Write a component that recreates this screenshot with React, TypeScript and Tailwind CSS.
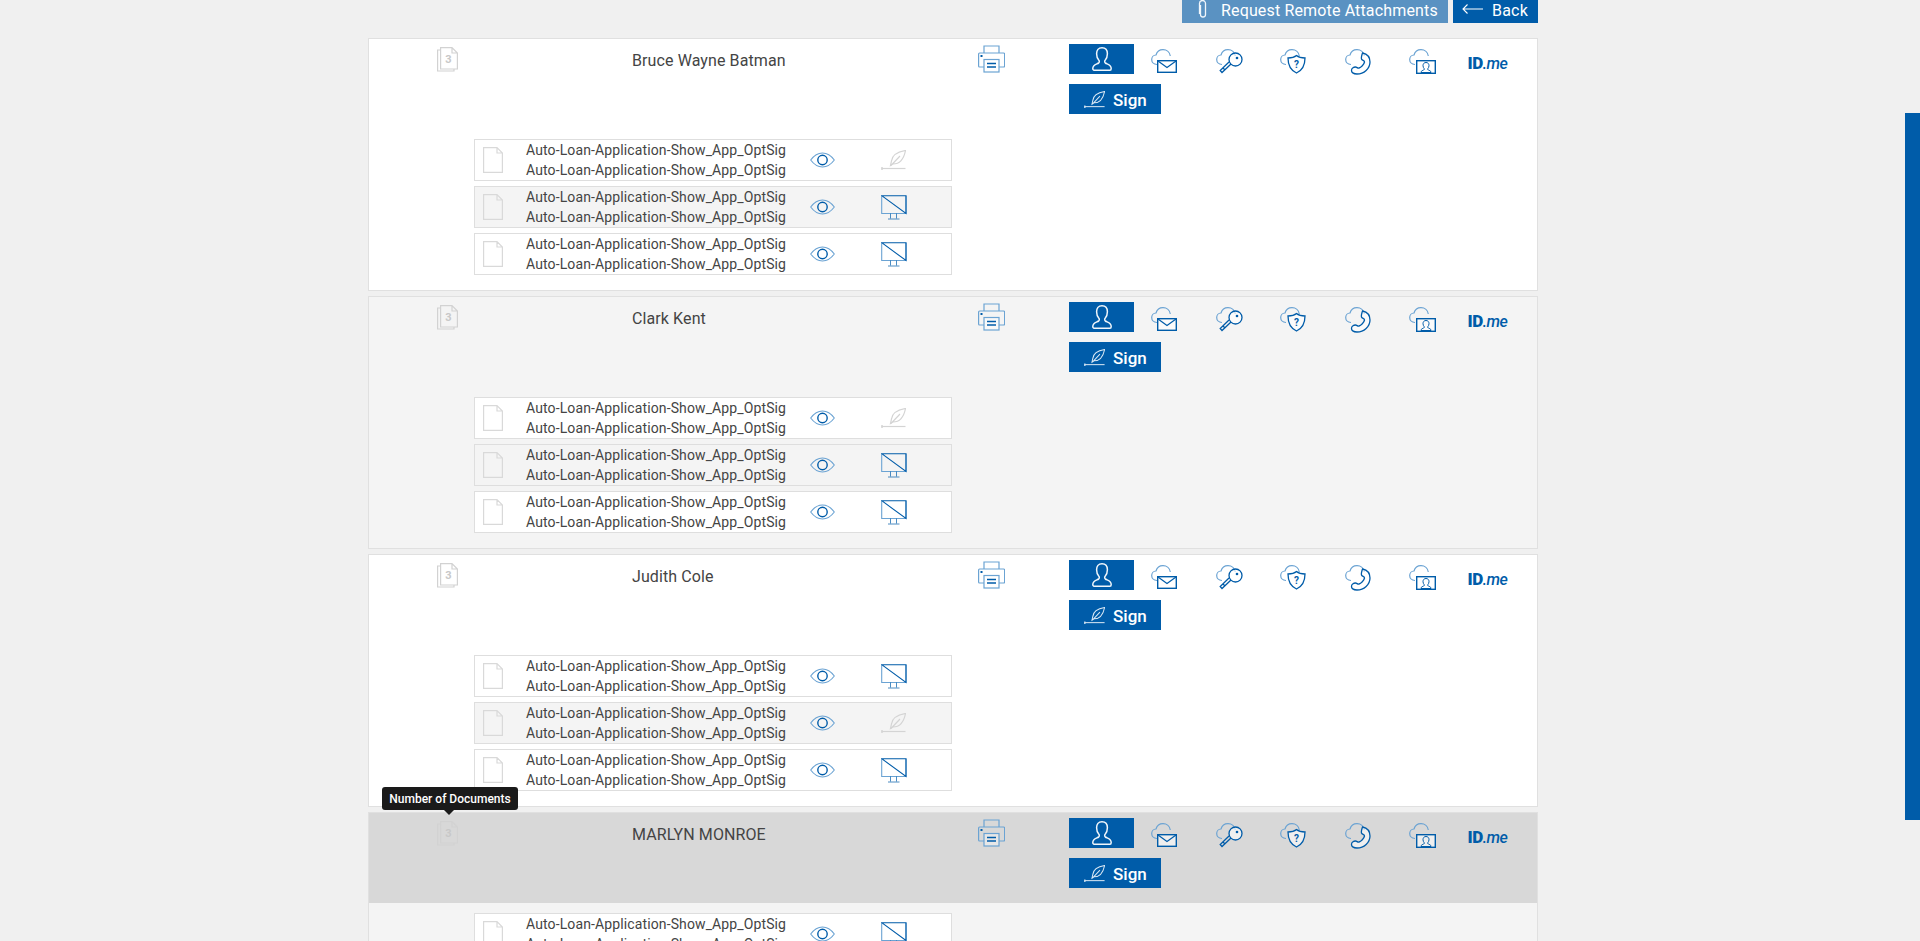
import type { ReactNode } from "react";

const DARK = "#005ca9";
const LIGHT = "#6ba3d3";

function Cloud() {
  return <path d="M6 15.5C2.5 15.5.7 13 .7 10.500.7 8 2.500 6 5 6 6 2.500 9 .7 12 .7c3.800 0 6.800 2.600 7.300 6.300" fill="none" stroke={LIGHT} strokeWidth="1.200" />;
}

function Printer() {
  return (
    <svg width="27" height="28" viewBox="0 0 27 28" fill="none" className="block">
      <path d="M6 8V1h15v7" stroke={LIGHT} strokeWidth="1.200" />
      <path d="M6 22H1.500Q.6 22 .6 21V9q0-1 1-1h24q1 0 1 1v12q0 1-1 1H21" stroke={LIGHT} strokeWidth="1.200" />
      <rect x="2.500" y="10" width="2" height="2" fill={DARK} />
      <rect x="6" y="14.500" width="15" height="12.500" fill="#fff" fillOpacity="0.4" stroke={LIGHT} strokeWidth="1.200" />
      <path d="M9 18.500h9M9 22h9" stroke={DARK} strokeWidth="1.400" />
    </svg>
  );
}

function Stack() {
  return (
    <svg width="21" height="25" viewBox="0 0 21 25" fill="none" className="block">
      <path d="M3 3H.6v21h16.400v-2" stroke="#d2d2d2" strokeWidth="1.200" />
      <path d="M3.600.6h11.400l5.400 5.400v16H3.600zM15 .6V6h5.400" stroke="#d2d2d2" strokeWidth="1.200" />
      <text x="11.500" y="16" textAnchor="middle" fontSize="11" fontWeight="700" fill="#c8c8c8" fontFamily="Roboto, sans-serif">3</text>
    </svg>
  );
}

function Person() {
  return (
    <svg width="20" height="24" viewBox="0 0 20 24" fill="none" className="block">
      <path d="M10 .8c3.600 0 5.400 2.700 5.400 6 0 3-1 5.300-2.400 6.700-.5.600-.4 2 .3 2.500 2 1.300 5.900 1.600 5.900 5.400 0 .9-.5 1.800-1.300 1.800H2.100C1.300 23.200.8 22.300.8 21.400c0-3.800 3.900-4.100 5.900-5.400.7-.5.800-1.900.3-2.500C5.600 12.100 4.600 9.800 4.600 6.800c0-3.300 1.800-6 5.400-6z" stroke="#f0f6fb" strokeWidth="1.500" />
    </svg>
  );
}

function Feather({ color, width = 25, height = 20 }: { color: string; width?: number; height?: number }) {
  return (
    <svg width={width} height={height} viewBox="0 0 25 20" fill="none" className="block">
      <path d="M24.500.5C16 2 11 6 10.500 11L9.500 15.500 12 14C19 14 23 8 24.500.5zM10 15.500L19 6" stroke={color} strokeWidth="1.200" />
      <path d="M.5 18.500h24" stroke={color} strokeWidth="1.200" />
      <path d="M1 17v3" stroke={color} strokeWidth="1.500" />
    </svg>
  );
}

function Eye() {
  return (
    <svg width="25" height="16" viewBox="0 0 25 16" fill="none" className="block">
      <path d="M.7 8C4 3.500 8 1 12.500 1S21 3.500 24.300 8C21 12.500 17 15 12.500 15S4 12.500.7 8z" stroke={LIGHT} strokeWidth="1.100" />
      <circle cx="12.500" cy="8" r="4.700" stroke={DARK} strokeWidth="1.400" />
    </svg>
  );
}

function Monitor() {
  return (
    <svg width="26" height="25" viewBox="0 0 26 25" fill="none" className="block">
      <path d="M.7 .7V18.500H25V.7" stroke={LIGHT} strokeWidth="1.100" />
      <path d="M.7 .7H25V18.500z" stroke={DARK} strokeWidth="1.100" />
      <path d="M9.500 18.500v5M15.500 18.500v5M7 24h11.500" stroke={DARK} strokeOpacity="0.7" strokeWidth="1" />
    </svg>
  );
}

function Doc() {
  return (
    <svg width="20" height="26" viewBox="0 0 20 26" fill="none" className="block">
      <path d="M.6.6h13.400l5.400 5.400v19.400H.6zM14 .6V6h5.400" stroke="#d9d9d9" strokeWidth="1.200" />
    </svg>
  );
}

function MailIcon() {
  return (
    <svg width="26" height="24" viewBox="0 0 26 24" fill="none" className="block">
      <Cloud />
      <rect x="6.700" y="11.700" width="18.600" height="11.600" fill="#fff" fillOpacity="0.6" stroke={DARK} strokeWidth="1.400" />
      <path d="M7 12l9 6.500 9-6.500" stroke={DARK} strokeWidth="1.200" />
    </svg>
  );
}

function KeyIcon() {
  return (
    <svg width="27" height="25" viewBox="0 0 27 25" fill="none" className="block">
      <Cloud />
      <circle cx="19.500" cy="10.500" r="6.500" fill="#fff" fillOpacity="0.6" stroke={DARK} strokeWidth="1.300" />
      <circle cx="21" cy="9" r="1.300" fill={DARK} />
      <path d="M15 15L6 23.500 4.200 21.500 13 13M9 21l-2-2" stroke={DARK} strokeWidth="1.300" />
    </svg>
  );
}

function ShieldIcon() {
  return (
    <svg width="26" height="25" viewBox="0 0 26 25" fill="none" className="block">
      <Cloud />
      <path d="M16.500 6.500c2 1.700 5 2.500 8.500 2.500 0 7-2 12-8.500 15C10 21 8 16 8 9c3.500 0 6.500-.8 8.500-2.500z" fill="#fff" fillOpacity="0.6" stroke={DARK} strokeWidth="1.300" />
      <text x="16.500" y="18.500" textAnchor="middle" fontSize="10" fontWeight="700" fill={DARK} fontFamily="Roboto, sans-serif">?</text>
    </svg>
  );
}

function PhoneIcon() {
  return (
    <svg width="27" height="26" viewBox="0 0 27 26" fill="none" className="block">
      <Cloud />
      <path d="M17.500 4c4.500 1 7.500 4.500 7.500 9 0 6.500-6 12-13 12-2.500 0-5.500-1-5.500-3.500 0-2 2-3.500 4-3.500 1.500 0 2 1.500 3.500 1 2-.5 5-3.500 5.500-6 .2-1.500-2.500-1.500-3-3-.5-1.500.5-4.500 1-6z" fill="#fff" fillOpacity="0.6" stroke={DARK} strokeWidth="1.300" />
    </svg>
  );
}

function ContactIcon() {
  return (
    <svg width="27" height="25" viewBox="0 0 27 25" fill="none" className="block">
      <Cloud />
      <rect x="7.700" y="11.700" width="18.600" height="12.600" fill="#fff" fillOpacity="0.6" stroke={DARK} strokeWidth="1.400" />
      <path d="M17 13.500c2 0 3 1.400 3 3.200 0 1.300-.6 2.300-1.200 3-.3.500 0 1 .5 1.300 1 .5 2.700.7 2.700 2.500H12c0-1.800 1.700-2 2.700-2.500.5-.3.800-.8.500-1.300-.6-.7-1.200-1.700-1.200-3 0-1.800 1-3.200 3-3.200z" stroke={DARK} strokeWidth="1" />
    </svg>
  );
}

function CellIcon({ children }: { children: ReactNode }) {
  return <div className="w-[64.5px] pl-[17px] pt-[5px]">{children}</div>;
}

function Row({ shaded, signed }: { shaded: boolean; signed: boolean }) {
  return (
    <div className={`flex h-[42px] w-[478px] items-center border border-[#dedede] pl-[8px] ${shaded ? "bg-[#f4f4f4]" : "bg-white"}`}>
      <Doc />
      <div className="ml-[23px] w-[258px] text-[14px] leading-[20px] tracking-[0.12px] text-[#444]">
        <div className="whitespace-nowrap">Auto-Loan-Application-Show_App_OptSig</div>
        <div className="whitespace-nowrap">Auto-Loan-Application-Show_App_OptSig</div>
      </div>
      <div className="ml-[26px]"><Eye /></div>
      <div className="ml-[46px]">{signed ? <Feather color="#d4d4d4" /> : <Monitor />}</div>
    </div>
  );
}

type Signer = { name: string; bg: string; headBg: string; signed: number; tip?: boolean };

const signers: Signer[] = [
  { name: "Bruce Wayne Batman", bg: "bg-white", headBg: "", signed: 0 },
  { name: "Clark Kent", bg: "bg-[#f4f4f4]", headBg: "", signed: 0 },
  { name: "Judith Cole", bg: "bg-white", headBg: "", signed: 1 },
  { name: "MARLYN MONROE", bg: "bg-[#f4f4f4]", headBg: "bg-[#d8d8d8]", signed: -1, tip: true },
];

function Panel({ s }: { s: Signer }) {
  return (
    <div className={`relative mb-[5px] h-[253px] w-[1170px] shrink-0 border border-[#e0e0e0] ${s.bg}`}>
      {s.tip && (
        <div className="absolute left-[13px] top-[-26px] z-10 flex h-[23px] w-[136px] items-center justify-center rounded-[3px] bg-[#1a1a1a] text-[12px] font-medium text-white">
          Number of Documents
          <span className="absolute bottom-[-5px] left-[62px] h-0 w-0 border-x-[5px] border-t-[5px] border-x-transparent border-t-[#1a1a1a]" />
        </div>
      )}
      <div className={`flex h-[90px] ${s.headBg}`}>
        <div className="ml-[68px] w-[195px] pt-[8px]"><Stack /></div>
        <div className="w-[346px] pt-[11px] text-[16px] leading-[22px] tracking-[0.1px] text-[#444]">{s.name}</div>
        <div className="w-[91px] pt-[6px]"><Printer /></div>
        <div className="flex flex-col gap-[10px] pt-[5px]">
          <div className="flex h-[30px]">
            <div className="flex h-[30px] w-[65px] items-center justify-center bg-[#005ca9]"><Person /></div>
            <CellIcon><MailIcon /></CellIcon>
            <CellIcon><KeyIcon /></CellIcon>
            <CellIcon><ShieldIcon /></CellIcon>
            <CellIcon><PhoneIcon /></CellIcon>
            <CellIcon><ContactIcon /></CellIcon>
            <div className="ml-[11px] whitespace-nowrap pt-[9px] text-[17px] leading-[20px] font-black tracking-[-0.5px] text-[#005ca9]">
              ID<span className="text-[16px] font-medium italic">.me</span>
            </div>
          </div>
          <div className="flex h-[30px] w-[92px] items-center bg-[#005ca9] pl-[15px] text-[17px] font-medium text-white">
            <div className="mt-[1px]"><Feather color="#dbe9f5" width={21} height={17} /></div>
            <span className="ml-[8px] pt-[4px]">Sign</span>
          </div>
        </div>
      </div>
      <div className="ml-[105px] flex flex-col gap-[5px] pt-[10px]">
        {[0, 1, 2].map((i) => <Row key={i} shaded={i === 1} signed={i === s.signed} />)}
      </div>
    </div>
  );
}

export default function App() {
  return (
    <div className="relative h-[941px] overflow-hidden bg-[#f0f0f0] pl-[368px] font-['Roboto',sans-serif]">
      <div className="mb-[15px] flex h-[23px] w-[1170px] justify-end gap-[5px] text-[16px] text-white">
        <div className="flex w-[266px] items-center bg-[#5a92c2] pb-[2px] pl-[15px]">
          <svg width="11" height="19" viewBox="0 0 11 19" fill="none" className="-mt-[3px] block">
            <path d="M3.500 5v9.500a2.500 2.500 0 0 0 5 0V3.500a3 3 0 0 0-6 0V14" stroke="#f0f6fb" strokeWidth="1.300" />
          </svg>
          <span className="ml-[13px] tracking-[0.15px]">Request Remote Attachments</span>
        </div>
        <div className="flex w-[85px] items-center bg-[#005ca9] pb-[2px] pl-[9px]">
          <svg width="21" height="10" viewBox="0 0 21 10" fill="none" className="-mt-[4px] block">
            <path d="M21 5H1M5.500.5L1 5l4.500 4.500" stroke="#fff" strokeWidth="1.100" />
          </svg>
          <span className="ml-[9px] tracking-[0.2px]">Back</span>
        </div>
      </div>
      {signers.map((s) => <Panel key={s.name} s={s} />)}
      <div className="fixed right-0 top-[113px] h-[707px] w-[15px] bg-[#005ca9]" />
    </div>
  );
}
